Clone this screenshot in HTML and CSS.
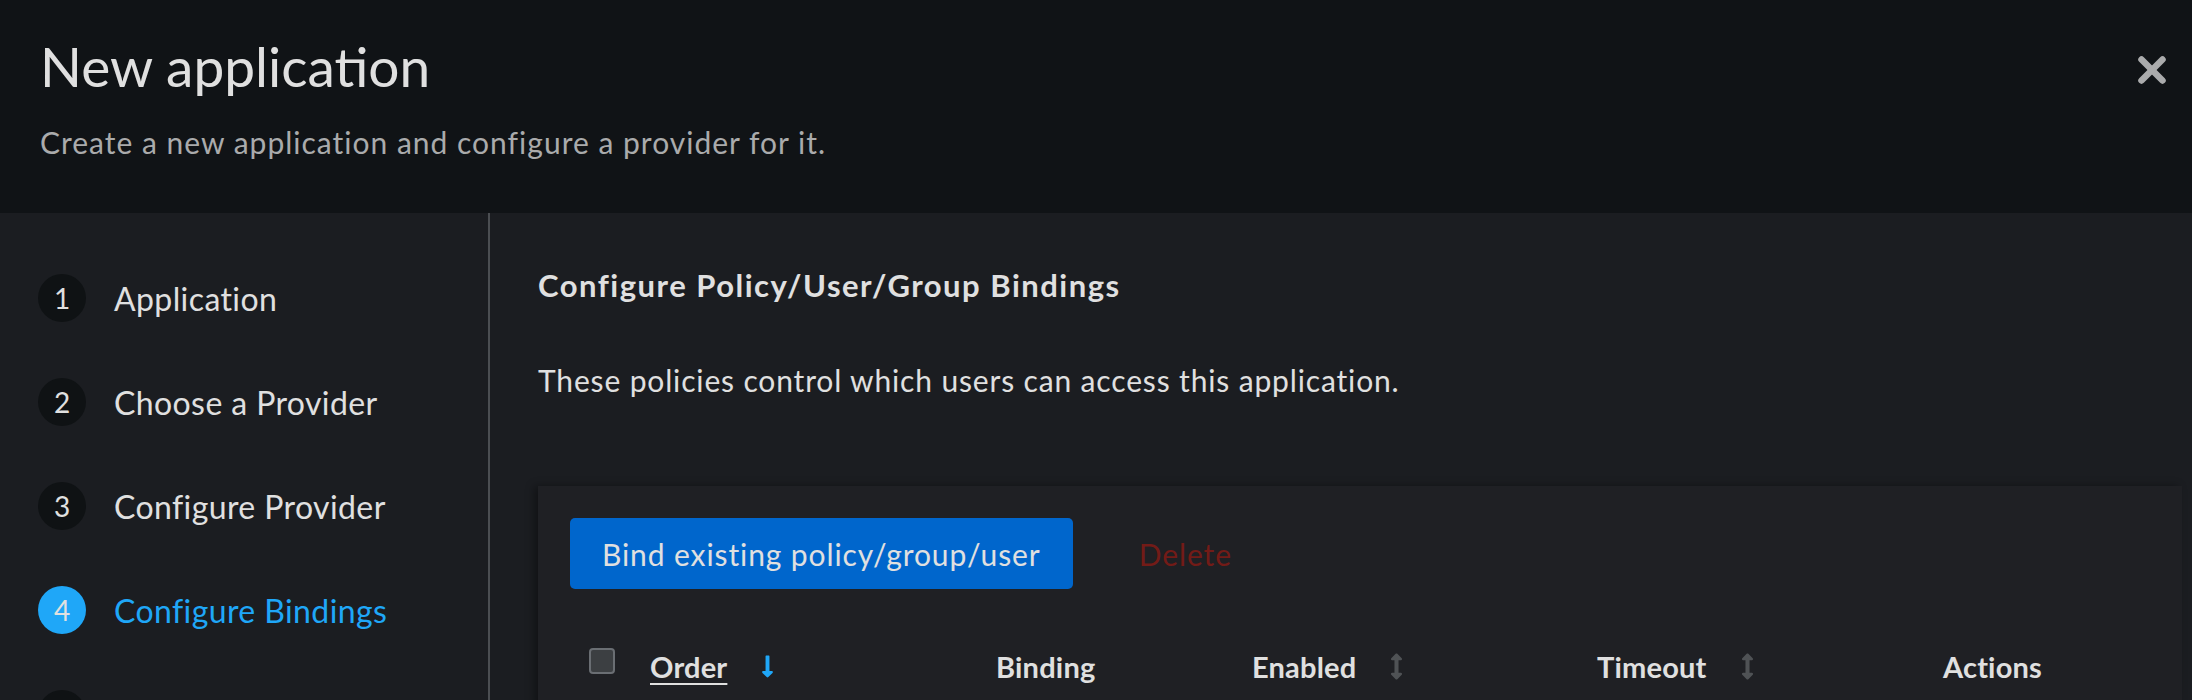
FILE: index.html
```html
<!DOCTYPE html>
<html>
<head>
  <link rel="stylesheet" href="styles.css">
</head>
<body>
  <div class="modal">
    <!-- Modal header -->
    <header class="modal-head">
      <div class="modal-head-text">
        <h1 class="modal-title">New application</h1>
        <p class="modal-desc">Create a new application and configure a provider for it.</p>
      </div>
      <button class="close-btn" aria-label="Close">
        <svg viewBox="0 0 28 28" width="28" height="28">
          <line x1="3.5" y1="3.5" x2="24.5" y2="24.5" />
          <line x1="24.5" y1="3.5" x2="3.5" y2="24.5" />
        </svg>
      </button>
    </header>

    <div class="wizard">
      <!-- Steps -->
      <nav class="wizard-nav">
        <ol class="steps">
          <li class="step"><span class="step-num">1</span><span class="step-label">Application</span></li>
          <li class="step"><span class="step-num">2</span><span class="step-label">Choose a Provider</span></li>
          <li class="step"><span class="step-num">3</span><span class="step-label">Configure Provider</span></li>
          <li class="step current"><span class="step-num">4</span><span class="step-label">Configure Bindings</span></li>
          <li class="step"><span class="step-num">5</span><span class="step-label">Review and Submit</span></li>
        </ol>
      </nav>

      <!-- Current step -->
      <main class="wizard-main">
        <h2 class="step-title">Configure Policy/User/Group Bindings</h2>
        <p class="step-desc">These policies control which users can access this application.</p>

        <section class="card">
          <div class="toolbar">
            <button class="btn btn-primary">Bind existing policy/group/user</button>
            <button class="btn btn-danger-link" disabled>Delete</button>
          </div>

          <table class="bindings">
            <colgroup>
              <col class="c-check">
              <col class="c-order">
              <col class="c-binding">
              <col class="c-enabled">
              <col class="c-timeout">
              <col class="c-actions">
            </colgroup>
            <thead>
              <tr>
                <th class="check-cell"><span class="checkbox"></span></th>
                <th>
                  <span class="sort-btn">
                    <span class="sorted">Order</span>
                    <svg class="sort-icon active" viewBox="0 0 256 512" width="13" height="25"><path d="M168 345.941V44c0-6.627-5.373-12-12-12h-56c-6.627 0-12 5.373-12 12v301.941H41.941c-21.382 0-32.09 25.851-16.971 40.971l86.059 86.059c9.373 9.373 24.569 9.373 33.941 0l86.059-86.059c15.119-15.119 4.411-40.971-16.971-40.971H168z"/></svg>
                  </span>
                </th>
                <th>Binding</th>
                <th>
                  <span class="sort-btn">
                    Enabled
                    <svg class="sort-icon" viewBox="0 0 256 512" width="13" height="27"><path d="M214.059 377.941H168V134.059h46.059c21.382 0 32.09-25.851 16.971-40.971L144.971 7.029c-9.373-9.373-24.568-9.373-33.941 0L24.971 93.088c-15.119 15.119-4.411 40.971 16.971 40.971H88v243.882H41.941c-21.382 0-32.09 25.851-16.971 40.971l86.059 86.059c9.373 9.373 24.568 9.373 33.941 0l86.059-86.059c15.12-15.119 4.412-40.971-16.97-40.971z"/></svg>
                  </span>
                </th>
                <th>
                  <span class="sort-btn">
                    Timeout
                    <svg class="sort-icon" viewBox="0 0 256 512" width="13" height="27"><path d="M214.059 377.941H168V134.059h46.059c21.382 0 32.09-25.851 16.971-40.971L144.971 7.029c-9.373-9.373-24.568-9.373-33.941 0L24.971 93.088c-15.119 15.119-4.411 40.971 16.971 40.971H88v243.882H41.941c-21.382 0-32.09 25.851-16.971 40.971l86.059 86.059c9.373 9.373 24.568 9.373 33.941 0l86.059-86.059c15.12-15.119 4.412-40.971-16.97-40.971z"/></svg>
                  </span>
                </th>
                <th>Actions</th>
              </tr>
            </thead>
          </table>
        </section>
      </main>
    </div>
  </div>
</body>
</html>
```

FILE: styles.css
```css
* {
  margin: 0;
  padding: 0;
  box-sizing: border-box;
}

body {
  background: #1b1d21;
  color: #e0e0e0;
  font-family: Lato, "Open Sans", sans-serif;
  overflow: hidden;
}

/* Header */
.modal-head {
  height: 213px;
  background: #101316;
  display: flex;
  justify-content: space-between;
  align-items: flex-start;
  padding: 0 26px 0 40px;
}

.modal-title {
  font-size: 55px;
  font-weight: 400;
  line-height: 1;
  margin-top: 39px;
  color: #e0e0e0;
}

.modal-desc {
  font-size: 30px;
  letter-spacing: 1px;
  line-height: 1;
  margin-top: 33px;
  color: #aaabac;
}

.close-btn {
  background: none;
  border: none;
  cursor: pointer;
  margin-top: 56px;
  width: 28px;
  height: 28px;
}

.close-btn svg line {
  stroke: #aaabac;
  stroke-width: 6.5;
  stroke-linecap: round;
}

/* Body: steps + content */
.wizard {
  display: flex;
  height: 487px;
}

.wizard-nav {
  width: 490px;
  flex-shrink: 0;
  border-right: 2px solid #4b4e52;
}

.steps {
  list-style: none;
  padding: 61px 0 0 38px;
  display: flex;
  flex-direction: column;
  gap: 56px;
}

.step {
  display: flex;
  align-items: center;
  gap: 28px;
  height: 48px;
  font-size: 32px;
  letter-spacing: 0.4px;
}

.step-num {
  width: 48px;
  height: 48px;
  border-radius: 50%;
  background: #0f1214;
  display: flex;
  align-items: center;
  justify-content: center;
  font-size: 28px;
  letter-spacing: 0;
}

.step.current .step-num {
  background: #1fa7f8;
}

.step.current .step-label {
  color: #1fa7f8;
}

.wizard-main {
  flex: 1;
  padding: 0 10px 0 48px;
}

.step-title {
  font-size: 31px;
  font-weight: 700;
  letter-spacing: 1.5px;
  line-height: 1;
  margin-top: 57px;
}

.step-desc {
  font-size: 30px;
  letter-spacing: 0.85px;
  line-height: 1;
  margin-top: 64px;
}

/* Card with the bindings table */
.card {
  margin-top: 91px;
  background: #1f2024;
  box-shadow: -4px 0 8px rgba(0, 0, 0, 0.35);
  min-height: 300px;
}

.toolbar {
  display: flex;
  align-items: center;
  gap: 34px;
  padding: 32px 32px 0;
}

.btn {
  font-family: inherit;
  font-size: 30px;
  letter-spacing: 0.9px;
  height: 71px;
  padding: 0 32px;
  border: none;
  border-radius: 5px;
  cursor: pointer;
}

.btn-primary {
  background: #0066cc;
  color: #e0e0e0;
}

.btn-danger-link {
  background: none;
  color: #731b17;
}

.bindings {
  width: 100%;
  table-layout: fixed;
  border-collapse: collapse;
  margin-top: 32px;
}

.c-check { width: 96px; }
.c-order { width: 346px; }
.c-binding { width: 256px; }
.c-enabled { width: 345px; }
.c-timeout { width: 346px; }

.bindings th {
  height: 90px;
  padding-left: 16px;
  text-align: left;
  font-size: 29px;
  font-weight: 700;
  letter-spacing: 0.2px;
  vertical-align: middle;
}

.bindings th.check-cell {
  padding-left: 51px;
}

.checkbox {
  display: block;
  width: 26px;
  height: 26px;
  background: #3c3f42;
  border: 2px solid #6a6e73;
  border-radius: 4px;
  margin-top: -10px;
}

.sort-btn {
  display: inline-flex;
  align-items: center;
  gap: 34px;
}

.sorted {
  text-decoration: underline;
  text-decoration-thickness: 2px;
  text-underline-offset: 5px;
}

.sort-icon {
  fill: #4f5255;
}

.sort-icon.active {
  fill: #1fa7f8;
}
```
